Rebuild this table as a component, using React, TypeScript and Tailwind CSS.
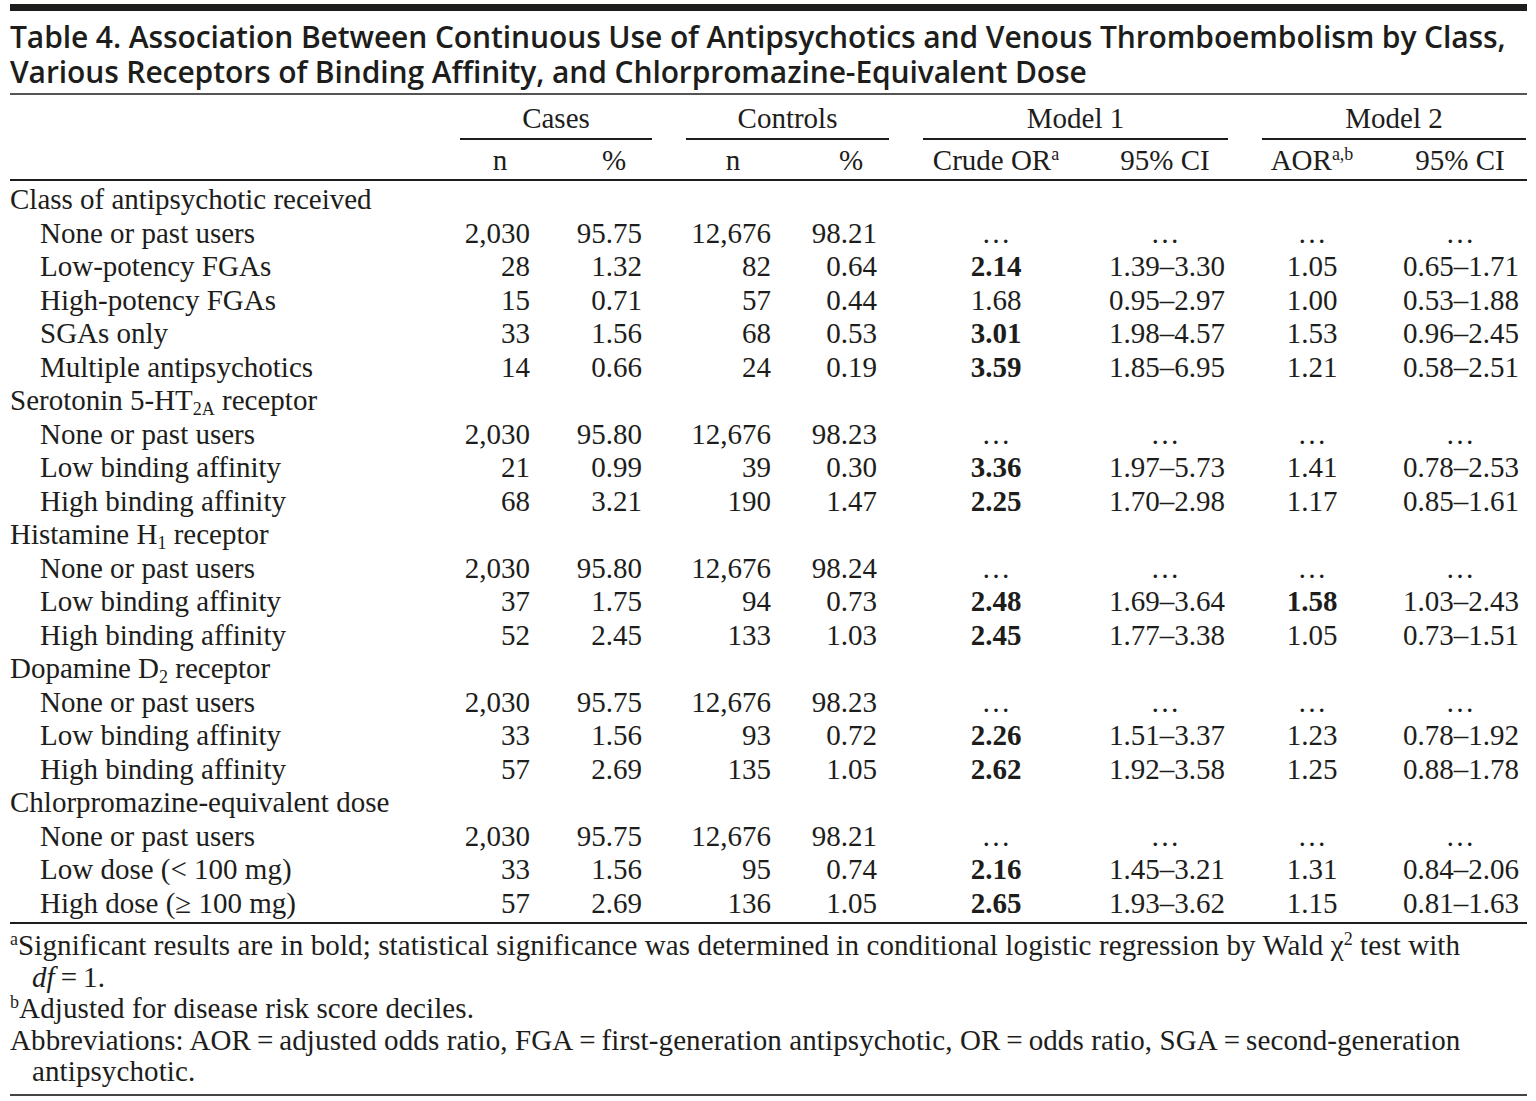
import React from "react";

type Row =
  | { kind: "head"; label: React.ReactNode }
  | { kind: "item"; label: React.ReactNode; v: string[]; bold?: number[] };

const dots = ["…", "…", "…", "…"];

const rows: Row[] = [
  { kind: "head", label: "Class of antipsychotic received" },
  { kind: "item", label: "None or past users", v: ["2,030", "95.75", "12,676", "98.21", ...dots] },
  { kind: "item", label: "Low-potency FGAs", v: ["28", "1.32", "82", "0.64", "2.14", "1.39–3.30", "1.05", "0.65–1.71"], bold: [4] },
  { kind: "item", label: "High-potency FGAs", v: ["15", "0.71", "57", "0.44", "1.68", "0.95–2.97", "1.00", "0.53–1.88"] },
  { kind: "item", label: "SGAs only", v: ["33", "1.56", "68", "0.53", "3.01", "1.98–4.57", "1.53", "0.96–2.45"], bold: [4] },
  { kind: "item", label: "Multiple antipsychotics", v: ["14", "0.66", "24", "0.19", "3.59", "1.85–6.95", "1.21", "0.58–2.51"], bold: [4] },
  {
    kind: "head",
    label: (
      <>
        Serotonin 5-HT<Sub>2A</Sub> receptor
      </>
    ),
  },
  { kind: "item", label: "None or past users", v: ["2,030", "95.80", "12,676", "98.23", ...dots] },
  { kind: "item", label: "Low binding affinity", v: ["21", "0.99", "39", "0.30", "3.36", "1.97–5.73", "1.41", "0.78–2.53"], bold: [4] },
  { kind: "item", label: "High binding affinity", v: ["68", "3.21", "190", "1.47", "2.25", "1.70–2.98", "1.17", "0.85–1.61"], bold: [4] },
  {
    kind: "head",
    label: (
      <>
        Histamine H<Sub>1</Sub> receptor
      </>
    ),
  },
  { kind: "item", label: "None or past users", v: ["2,030", "95.80", "12,676", "98.24", ...dots] },
  { kind: "item", label: "Low binding affinity", v: ["37", "1.75", "94", "0.73", "2.48", "1.69–3.64", "1.58", "1.03–2.43"], bold: [4, 6] },
  { kind: "item", label: "High binding affinity", v: ["52", "2.45", "133", "1.03", "2.45", "1.77–3.38", "1.05", "0.73–1.51"], bold: [4] },
  {
    kind: "head",
    label: (
      <>
        Dopamine D<Sub>2</Sub> receptor
      </>
    ),
  },
  { kind: "item", label: "None or past users", v: ["2,030", "95.75", "12,676", "98.23", ...dots] },
  { kind: "item", label: "Low binding affinity", v: ["33", "1.56", "93", "0.72", "2.26", "1.51–3.37", "1.23", "0.78–1.92"], bold: [4] },
  { kind: "item", label: "High binding affinity", v: ["57", "2.69", "135", "1.05", "2.62", "1.92–3.58", "1.25", "0.88–1.78"], bold: [4] },
  { kind: "head", label: "Chlorpromazine-equivalent dose" },
  { kind: "item", label: "None or past users", v: ["2,030", "95.75", "12,676", "98.21", ...dots] },
  { kind: "item", label: "Low dose (< 100 mg)", v: ["33", "1.56", "95", "0.74", "2.16", "1.45–3.21", "1.31", "0.84–2.06"], bold: [4] },
  { kind: "item", label: "High dose (≥ 100 mg)", v: ["57", "2.69", "136", "1.05", "2.65", "1.93–3.62", "1.15", "0.81–1.63"], bold: [4] },
];

// per data column: alignment + extra padding so numbers sit under their headers
const cellClass = [
  "text-right",
  "text-right pr-[5px]",
  "text-right",
  "text-right pr-[6px]",
  "text-center",
  "text-center",
  "text-center",
  "text-center",
];

function Sub({ children }: { children: React.ReactNode }) {
  return <span className="relative top-[0.3em] text-[0.62em] leading-none">{children}</span>;
}

function Sup({ children }: { children: React.ReactNode }) {
  return <span className="relative -top-[0.55em] text-[0.62em] leading-none">{children}</span>;
}

export default function App() {
  return (
    <div className="min-h-screen bg-white px-[10px] pt-[4px] text-[#1d1d1b]">
      <div className="w-[1517px]">
        <div className="h-[7px] bg-[#1d1d1b]" />

        <h1 className="mt-[8px] whitespace-nowrap font-['Open_Sans',sans-serif] text-[30px] font-semibold leading-[35px] tracking-[-0.1px]">
          Table 4. Association Between Continuous Use of Antipsychotics and Venous Thromboembolism by Class,
          <br />
          Various Receptors of Binding Affinity, and Chlorpromazine-Equivalent Dose
        </h1>
        <div className="mt-[4px] h-[2px] bg-[#555]" />

        <div className="font-['Liberation_Serif','Times_New_Roman',serif] text-[29px]">
          {/* group headings */}
          <div className="grid grid-cols-[450px_192px_34px_203px_34px_305px_34px_264px] pt-[7px] leading-[33px]">
            <div />
            <div className="flex flex-col">
              <span className="text-center">Cases</span>
              <span className="mt-[3px] h-[2px] bg-[#1d1d1b]" />
            </div>
            <div />
            <div className="flex flex-col">
              <span className="text-center">Controls</span>
              <span className="mt-[3px] h-[2px] bg-[#1d1d1b]" />
            </div>
            <div />
            <div className="flex flex-col">
              <span className="text-center">Model 1</span>
              <span className="mt-[3px] h-[2px] bg-[#1d1d1b]" />
            </div>
            <div />
            <div className="flex flex-col">
              <span className="text-center">Model 2</span>
              <span className="mt-[3px] h-[2px] bg-[#1d1d1b]" />
            </div>
          </div>

          {/* column headings */}
          <div className="grid grid-cols-[450px_80px_148px_90px_146px_144px_194px_100px_164px] pt-[4px] pb-[2px] leading-[33px]">
            <div />
            <div className="text-center">n</div>
            <div className="text-center">%</div>
            <div className="text-center">n</div>
            <div className="text-center">%</div>
            <div className="whitespace-nowrap text-center">
              Crude OR<Sup>a</Sup>
            </div>
            <div className="text-center">95% CI</div>
            <div className="whitespace-nowrap text-center">
              AOR<Sup>a,b</Sup>
            </div>
            <div className="pl-[32px] text-center">95% CI</div>
          </div>
          <div className="h-[2px] bg-[#1d1d1b]" />

          {/* body */}
          <div className="pt-[2px]">
            {rows.map((r, i) =>
              r.kind === "head" ? (
                <div key={i} className="h-[33.5px] whitespace-nowrap leading-[33.5px]">
                  {r.label}
                </div>
              ) : (
                <div
                  key={i}
                  className="grid h-[33.5px] grid-cols-[450px_70px_117px_124px_112px_226px_112px_182px_114px] leading-[33.5px]"
                >
                  <div className="whitespace-nowrap pl-[30px]">{r.label}</div>
                  {r.v.map((v, j) => (
                    <div
                      key={j}
                      className={`${cellClass[j]} whitespace-nowrap ${r.bold?.includes(j) ? "font-bold" : ""}`}
                    >
                      {v}
                    </div>
                  ))}
                </div>
              )
            )}
          </div>
          <div className="mt-[2px] h-[2px] bg-[#1d1d1b]" />

          {/* footnotes */}
          <div className="whitespace-nowrap pt-[6px] leading-[31.5px] tracking-[0.1px]">
            <p className="pl-[22px] -indent-[22px]">
              <Sup>a</Sup>Significant results are in bold; statistical significance was determined in conditional
              logistic regression by Wald χ<Sup>2</Sup> test with
              <br />
              <i>df</i>{"\u2009=\u20091."}
            </p>
            <p className="pl-[22px] -indent-[22px]">
              <Sup>b</Sup>Adjusted for disease risk score deciles.
            </p>
            <p className="pl-[22px] -indent-[22px]">
              {"Abbreviations: AOR\u2009=\u2009adjusted odds ratio, FGA\u2009=\u2009first-generation antipsychotic, OR\u2009=\u2009odds ratio, SGA\u2009=\u2009second-generation"}
              <br />
              antipsychotic.
            </p>
          </div>
          <div className="mt-[6px] h-[2px] bg-[#444]" />
        </div>
      </div>
    </div>
  );
}
